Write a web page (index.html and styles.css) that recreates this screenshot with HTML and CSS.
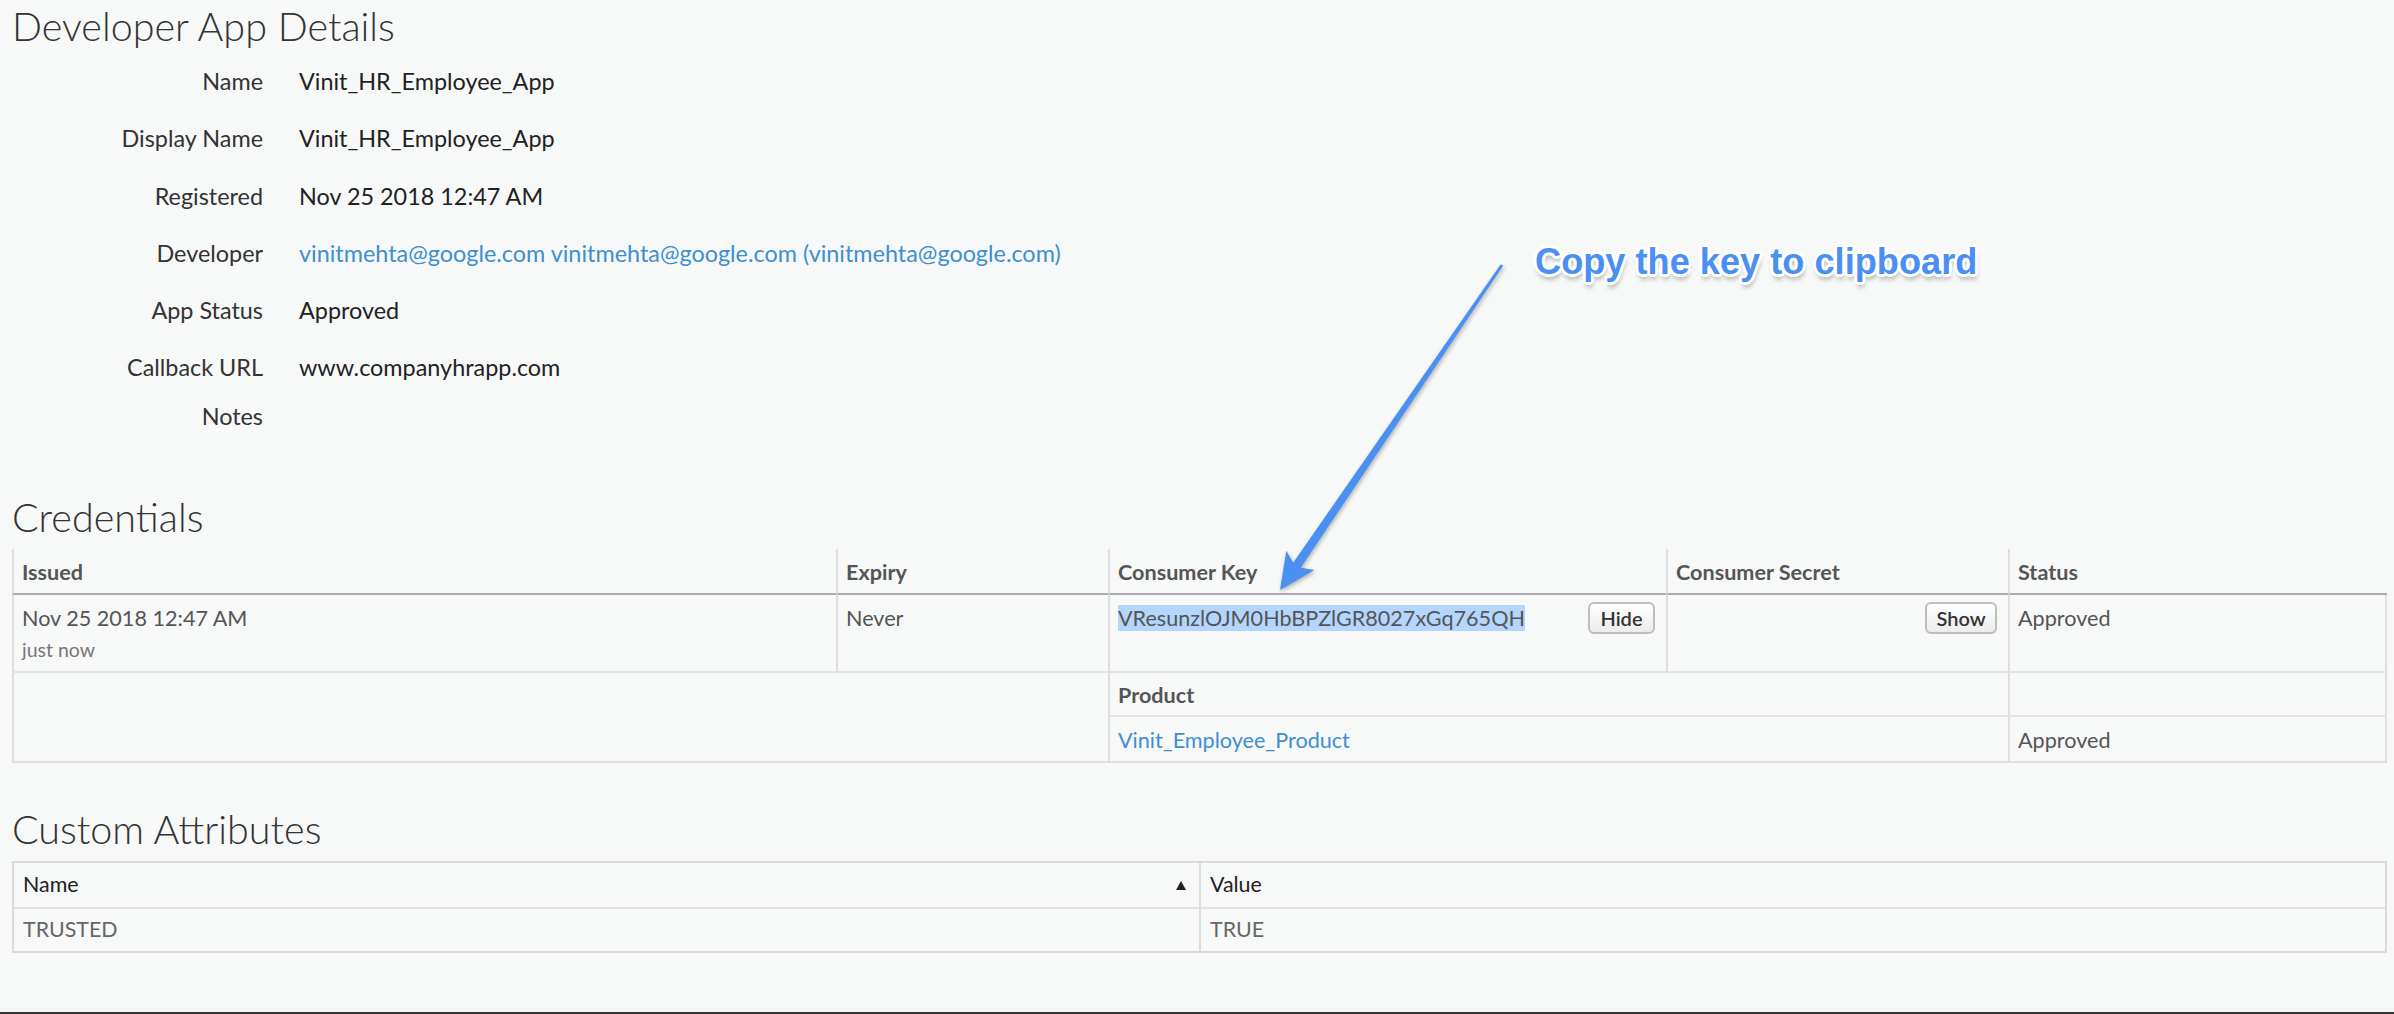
FILE: index.html
```html
<!DOCTYPE html>
<html lang="en">
<head>
<meta charset="utf-8">
<title>Developer App Details</title>
<link rel="stylesheet" href="styles.css">
</head>
<body>
<div class="page">
  <main class="content">
    <h1 class="section-title title-first">Developer App Details</h1>
    <dl class="details">
      <div class="detail-row"><dt>Name</dt><dd>Vinit_HR_Employee_App</dd></div>
      <div class="detail-row"><dt>Display Name</dt><dd>Vinit_HR_Employee_App</dd></div>
      <div class="detail-row"><dt>Registered</dt><dd>Nov 25 2018 12:47 AM</dd></div>
      <div class="detail-row"><dt>Developer</dt><dd><a class="link" href="#">vinitmehta@google.com</a> <a class="link" href="#">vinitmehta@google.com (vinitmehta@google.com)</a></dd></div>
      <div class="detail-row"><dt>App Status</dt><dd>Approved</dd></div>
      <div class="detail-row detail-row-tight"><dt>Callback URL</dt><dd>www.companyhrapp.com</dd></div>
      <div class="detail-row detail-row-last"><dt>Notes</dt><dd></dd></div>
    </dl>

    <h2 class="section-title title-creds">Credentials</h2>
    <table class="cred-table">
      <colgroup>
        <col class="col-issued">
        <col class="col-expiry">
        <col class="col-key">
        <col class="col-secret">
        <col class="col-status">
      </colgroup>
      <thead>
        <tr>
          <th class="cell-first">Issued</th>
          <th>Expiry</th>
          <th>Consumer Key</th>
          <th>Consumer Secret</th>
          <th class="cell-last-head">Status</th>
        </tr>
      </thead>
      <tbody>
        <tr class="cred-row">
          <td class="cell-first">Nov 25 2018 12:47 AM<div class="sub">just now</div></td>
          <td>Never</td>
          <td><button class="btn btn-hide" type="button">Hide</button><span class="selected">VResunzlOJM0HbBPZlGR8027xGq765QH</span></td>
          <td><button class="btn btn-show" type="button">Show</button></td>
          <td class="cell-last">Approved</td>
        </tr>
        <tr class="product-head">
          <td class="cell-first cell-blank" colspan="2" rowspan="2"></td>
          <th class="product-th" colspan="2">Product</th>
          <td class="cell-last"></td>
        </tr>
        <tr class="product-row">
          <td colspan="2"><a class="link" href="#">Vinit_Employee_Product</a></td>
          <td class="cell-last">Approved</td>
        </tr>
      </tbody>
    </table>

    <h2 class="section-title title-attrs">Custom Attributes</h2>
    <table class="attr-table">
      <colgroup>
        <col class="col-name">
        <col class="col-value">
      </colgroup>
      <thead>
        <tr>
          <th><span class="sort-up"></span>Name</th>
          <th class="attr-value">Value</th>
        </tr>
      </thead>
      <tbody>
        <tr>
          <td>TRUSTED</td>
          <td class="attr-value">TRUE</td>
        </tr>
      </tbody>
    </table>
  </main>

  <div class="callout">Copy the key to clipboard</div>
  <svg class="arrow" width="270" height="360" viewBox="0 0 270 360" aria-hidden="true">
    <polygon points="240.8,14.2 33.2,312.7 26.3,300.7 20,340 54.3,319.9 40.6,317.7 243.2,15.8" fill="#4a8ff2"/>
  </svg>

  <footer class="bottom-bar"></footer>
</div>
</body>
</html>
```

FILE: styles.css
```css
* { box-sizing: border-box; }

html, body {
  margin: 0;
  padding: 0;
}

body {
  background: #f7f8f8;
  font-family: Lato, "Open Sans", "Liberation Sans", sans-serif;
  color: #333;
}

.page {
  position: relative;
  min-height: 1014px;
  display: flex;
  flex-direction: column;
}

.content {
  padding: 0 7px 0 12px;
}

.bottom-bar {
  margin-top: auto;
  height: 2px;
  background: #333;
}

.section-title {
  margin: 0;
  font-weight: 300;
  font-size: 39.5px;
  line-height: 48px;
  color: #333;
}

.title-first { margin-top: 2px; }
.title-creds { margin-top: 64px; margin-bottom: 8px; }
.title-attrs { margin-top: 42px; margin-bottom: 8px; }

/* details */
.details {
  margin: 18px 0 0;
  padding: 0;
}

.detail-row {
  display: grid;
  grid-template-columns: 251px 1fr;
  column-gap: 36px;
  font-size: 23.4px;
  line-height: 26px;
  margin-bottom: 31.3px;
}

.detail-row-tight { margin-bottom: 23px; }
.detail-row-last { margin-bottom: 0; }

.detail-row dt {
  text-align: right;
  color: #333;
}

.detail-row dd {
  margin: 0;
  color: #222;
  min-height: 26px;
}

.link {
  color: #3d8fd1;
  text-decoration: none;
}

/* credentials table */
.cred-table {
  table-layout: fixed;
  width: 2375px;
  border-collapse: separate;
  border-spacing: 0;
  font-size: 21.6px;
  line-height: 24px;
  color: #555;
}

.col-issued { width: 824px; }
.col-expiry { width: 272px; }
.col-key { width: 558px; }
.col-secret { width: 342px; }
.col-status { width: 379px; }

.cred-table th,
.cred-table td {
  text-align: left;
  vertical-align: top;
  padding: 11px 11px 9px 8px;
  border-left: 2px solid #dedede;
}

.cred-table thead th {
  font-weight: 700;
  color: #555;
  border-bottom: 2px solid #ababab;
}

.cred-row td {
  border-bottom: 2px solid #e4e4e4;
  padding-top: 11px;
  padding-bottom: 9px;
}

.cred-table .cell-last {
  border-right: 2px solid #e0e0e0;
}

.sub {
  margin-top: 8px;
  font-size: 19.5px;
  color: #777;
}

.selected {
  background: #b4d5fe;
  color: #555;
}

.btn {
  float: right;
  margin-top: -4px;
  height: 32px;
  padding: 0 8px;
  font-family: Lato, "Open Sans", sans-serif;
  font-size: 20px;
  font-weight: 600;
  color: #333;
  background: linear-gradient(#ffffff, #ececec);
  border: 2px solid #bdbdbd;
  border-radius: 6px;
}

.btn-hide { width: 67px; }
.btn-show { width: 72px; }

.product-head th,
.product-head td {
  padding-top: 10px;
  padding-bottom: 8px;
  border-bottom: 2px solid #e4e4e4;
}

.product-head .product-th {
  font-weight: 700;
  color: #555;
}

.cred-table .cell-blank {
  border-bottom: 2px solid #e0e0e0;
}

.product-row td {
  padding-top: 11px;
  padding-bottom: 9px;
  border-bottom: 2px solid #e0e0e0;
}

/* custom attributes table */
.attr-table {
  table-layout: fixed;
  width: 2375px;
  border-collapse: separate;
  border-spacing: 0;
  border: 2px solid #dadada;
  font-size: 21.4px;
  line-height: 24px;
}

.col-name { width: 1185px; }
.col-value { width: auto; }

.attr-table th,
.attr-table td {
  text-align: left;
  vertical-align: top;
  padding: 9px 9px 11px 9px;
}

.attr-table th {
  font-weight: 400;
  color: #222;
  border-bottom: 2px solid #e2e2e2;
}

.attr-table td {
  padding-top: 8px;
  padding-bottom: 10px;
  color: #666;
}

.attr-table .attr-value {
  border-left: 2px solid #dcdcdc;
}

.sort-up {
  float: right;
  margin: 9px 4px 0 0;
  width: 0;
  height: 0;
  border-left: 5px solid transparent;
  border-right: 5px solid transparent;
  border-bottom: 9px solid #222;
}

/* annotation overlay */
.callout {
  position: absolute;
  left: 1535px;
  top: 242px;
  font-family: "Liberation Sans", Arial, sans-serif;
  font-weight: 700;
  font-size: 36.2px;
  line-height: 40px;
  color: #4a8ff2;
  white-space: nowrap;
  text-shadow:
    3px 0 0 #fff, -3px 0 0 #fff, 0 3px 0 #fff, 0 -3px 0 #fff,
    2px 2px 0 #fff, -2px 2px 0 #fff, 2px -2px 0 #fff, -2px -2px 0 #fff,
    1px 5px 5px rgba(0, 0, 0, 0.35);
}

.arrow {
  position: absolute;
  left: 1260px;
  top: 250px;
  filter: drop-shadow(1px 2px 2px rgba(0, 0, 0, 0.3));
}
```
